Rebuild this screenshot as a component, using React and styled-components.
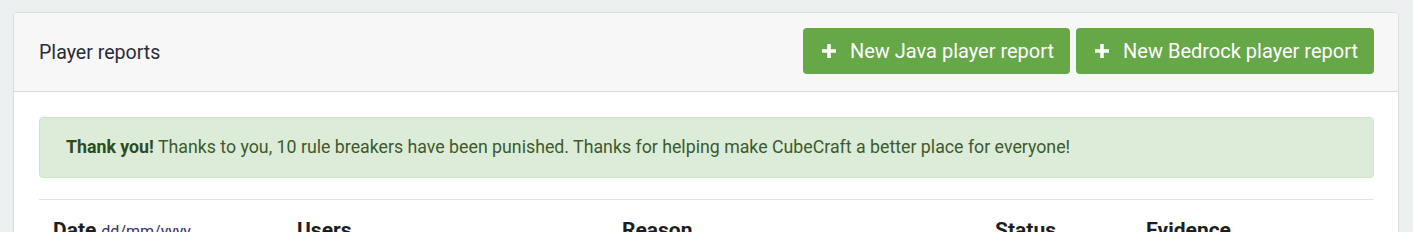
import React from "react";
import styled, { createGlobalStyle } from "styled-components";

const GlobalStyle = createGlobalStyle`
  html, body {
    margin: 0;
    padding: 0;
    background: #ecf0f1;
    font-family: Roboto, "Open Sans", sans-serif;
  }
`;

const Page = styled.div`
  padding: 12px 14px 0 13px;
`;

const Card = styled.div`
  background: #fff;
  border: 1px solid #dcdcdc;
  border-radius: 4px;
  overflow: hidden;
`;

const CardHeader = styled.div`
  display: flex;
  align-items: center;
  justify-content: space-between;
  background: #f7f7f7;
  border-bottom: 1px solid #d9d9d9;
  padding: 15px 24px 17px 25px;
`;

const Title = styled.h3`
  margin: 2px 0 0;
  font-size: 19.6px;
  font-weight: 400;
  color: #2b2b3a;
`;

const Actions = styled.div`
  display: flex;
  gap: 6px;
`;

const Button = styled.button`
  display: flex;
  align-items: center;
  gap: 14px;
  height: 46px;
  padding: 0 16px 0 19px;
  border: none;
  border-radius: 4px;
  background: #66a748;
  color: #fff;
  font-family: inherit;
  font-size: 20px;
  cursor: pointer;
`;

const CardBody = styled.div`
  padding: 25px 24px 0 25px;
`;

const Alert = styled.div`
  background: #dcecd8;
  border: 1px solid #cfe3c8;
  border-radius: 4px;
  color: #3c5a2c;
  font-size: 17.75px;
  padding: 18px 26px 18px;
  line-height: 23px;

  strong {
    font-weight: 700;
    color: #2f4a1f;
  }
`;

const Divider = styled.hr`
  border: none;
  border-top: 1px solid #e3e3e3;
  margin: 21px 0 0;
`;

const TableHead = styled.div`
  display: grid;
  grid-template-columns: 244px 325px 373px 151px 1fr;
  padding: 18px 14px 0;
`;

const Th = styled.div`
  font-size: 21px;
  font-weight: 700;
  color: #1e1e1e;
  white-space: nowrap;

  small {
    font-size: 16px;
    font-weight: 400;
    color: #33336a;
    margin-left: 5px;
  }
`;

const PlusIcon = () => (
  <svg width="14" height="14" viewBox="0 0 14 14">
    <path d="M5.2 0h3.6v5.2H14v3.6H8.8V14H5.2V8.8H0V5.2h5.2z" fill="#fff" />
  </svg>
);

export default function App() {
  return (
    <>
      <GlobalStyle />
      <Page>
        <Card>
          <CardHeader>
            <Title>Player reports</Title>
            <Actions>
              <Button>
                <PlusIcon />
                New Java player report
              </Button>
              <Button>
                <PlusIcon />
                New Bedrock player report
              </Button>
            </Actions>
          </CardHeader>
          <CardBody>
            <Alert>
              <strong>Thank you!</strong> Thanks to you, 10 rule breakers have been
              punished. Thanks for helping make CubeCraft a better place for everyone!
            </Alert>
            <Divider />
            <TableHead>
              <Th>
                Date<small>dd/mm/yyyy</small>
              </Th>
              <Th>Users</Th>
              <Th>Reason</Th>
              <Th>Status</Th>
              <Th>Evidence</Th>
            </TableHead>
          </CardBody>
        </Card>
      </Page>
    </>
  );
}
